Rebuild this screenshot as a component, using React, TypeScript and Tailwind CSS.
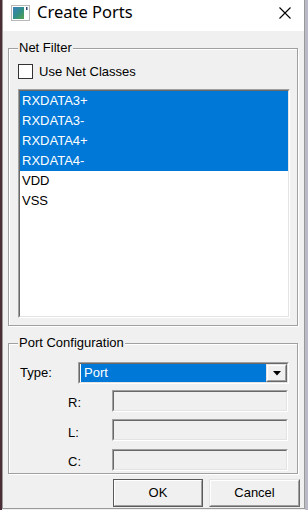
import React from 'react';

const nets = [
  { name: 'RXDATA3+', selected: true },
  { name: 'RXDATA3-', selected: true },
  { name: 'RXDATA4+', selected: true },
  { name: 'RXDATA4-', selected: true },
  { name: 'VDD', selected: false },
  { name: 'VSS', selected: false },
];

function GroupBox({ label, className, children }: { label: string; className: string; children: React.ReactNode }) {
  return (
    <div
      className={`relative ml-[5px] w-[290px] border border-[#a0a0a0] shadow-[inset_1px_1px_0_#fff,1px_1px_0_#fff] ${className}`}
    >
      {/* legend */}
      <span className="absolute -top-[9px] left-[9px] px-[1px] bg-[#f0f0f0] leading-[15px]">{label}</span>
      {children}
    </div>
  );
}

function Sunken({ className, inner, children }: { className: string; inner: string; children?: React.ReactNode }) {
  return (
    <div className={`border border-t-[#a0a0a0] border-l-[#a0a0a0] border-b-white border-r-white ${className}`}>
      <div className={`h-full border border-t-[#696969] border-l-[#696969] border-b-[#e3e3e3] border-r-[#e3e3e3] ${inner}`}>
        {children}
      </div>
    </div>
  );
}

function Button({ label, isDefault }: { label: string; isDefault?: boolean }) {
  return (
    <div
      className={`h-[28px] border ${
        isDefault
          ? 'w-[90px] border-[#5a5a5a]'
          : 'w-[91px] border-t-[#e3e3e3] border-l-[#e3e3e3] border-b-[#696969] border-r-[#696969]'
      }`}
    >
      <div className="h-full flex items-center justify-center border border-t-white border-l-white border-b-[#a0a0a0] border-r-[#a0a0a0]">
        {label}
      </div>
    </div>
  );
}

function TitleIcon() {
  return (
    <svg width="19" height="16" viewBox="0 0 19 16">
      <defs>
        <linearGradient id="ic" x1="0" y1="0" x2="1" y2="1">
          <stop offset="0" stopColor="#3f7fc0" />
          <stop offset="0.5" stopColor="#2f8f8a" />
          <stop offset="1" stopColor="#58a24c" />
        </linearGradient>
      </defs>
      <rect x="0.5" y="0.5" width="18" height="15" fill="#fff" stroke="#b8b8b8" />
      <rect x="2" y="2" width="11" height="12" fill="url(#ic)" />
      <rect x="15" y="2" width="1.5" height="3" fill="#2c4a78" />
    </svg>
  );
}

export default function App() {
  return (
    <div className="flex w-[308px] h-[510px] overflow-hidden bg-[#f0f0f0] text-[13px] text-black font-['Liberation_Sans',Arial,sans-serif]">
      <div className="w-[2px] bg-[#4b2d35]" />

      <div className="flex flex-col w-[303px] h-[509px] border-x border-b border-[#9a9a9a] bg-[#f0f0f0]">
        {/* Title bar */}
        <div className="h-[31px] pb-[6px] flex items-center pl-[8px] pr-[13px] bg-white">
          <TitleIcon />
          <span className="ml-[7px] text-[16.5px] leading-none font-['Noto_Sans',sans-serif]">Create Ports</span>
          <svg className="ml-auto" width="12" height="12" viewBox="0 0 12 12">
            <path d="M0.5 0.5 L11.5 11.5 M11.5 0.5 L0.5 11.5" stroke="#000" strokeWidth="1.1" />
          </svg>
        </div>

        {/* Net Filter */}
        <GroupBox label="Net Filter" className="mt-[17px] h-[278px] pt-[15px] pl-[9px]">
          <div className="flex items-center h-[15px]">
            <div className="w-[15px] h-[15px] border border-[#333] bg-white" />
            <span className="ml-[6px] leading-none">Use Net Classes</span>
          </div>
          <Sunken className="mt-[10px] w-[272px] h-[229px]" inner="bg-white">
            {nets.map((n) => (
              <div
                key={n.name}
                className={`h-[20px] leading-[20px] pl-[2px] ${n.selected ? 'bg-[#0078d7] text-white' : ''}`}
              >
                {n.name}
              </div>
            ))}
          </Sunken>
        </GroupBox>

        {/* Port Configuration */}
        <GroupBox label="Port Configuration" className="mt-[17px] h-[131px] pt-[18px]">
          <div className="flex items-center">
            <span className="w-[69px] pl-[11px]">Type:</span>
            <Sunken className="w-[211px] h-[22px]" inner="flex bg-white">
              <div className="w-[1px]" />
              <div className="flex-1 bg-[#0078d7] text-white leading-[18px] pl-[3px]">Port</div>
              <div className="w-[21px] border border-t-[#e3e3e3] border-l-[#e3e3e3] border-b-[#696969] border-r-[#696969] bg-[#f0f0f0]">
                <div className="h-full flex items-center justify-center border border-t-white border-l-white border-b-[#a0a0a0] border-r-[#a0a0a0]">
                  <svg width="8" height="5" viewBox="0 0 8 5">
                    <path d="M0 0 H8 L4 4.5 Z" fill="#000" />
                  </svg>
                </div>
              </div>
            </Sunken>
          </div>
          {['R:', 'L:', 'C:'].map((l, i) => (
            <div key={l} className={`flex items-center ${i === 0 ? 'mt-[5px]' : 'mt-[6px]'}`}>
              <span className="w-[103px] pl-[59px] pt-[4px]">{l}</span>
              <Sunken className="w-[176px] h-[22px]" inner="bg-[#f0f0f0]" />
            </div>
          ))}
        </GroupBox>

        {/* Buttons */}
        <div className="mt-[5px] flex justify-end gap-[6px] pr-[4px]">
          <Button label="OK" isDefault />
          <Button label="Cancel" />
        </div>
      </div>

      <div className="w-[3px] bg-[#b9bac6]" />
    </div>
  );
}
